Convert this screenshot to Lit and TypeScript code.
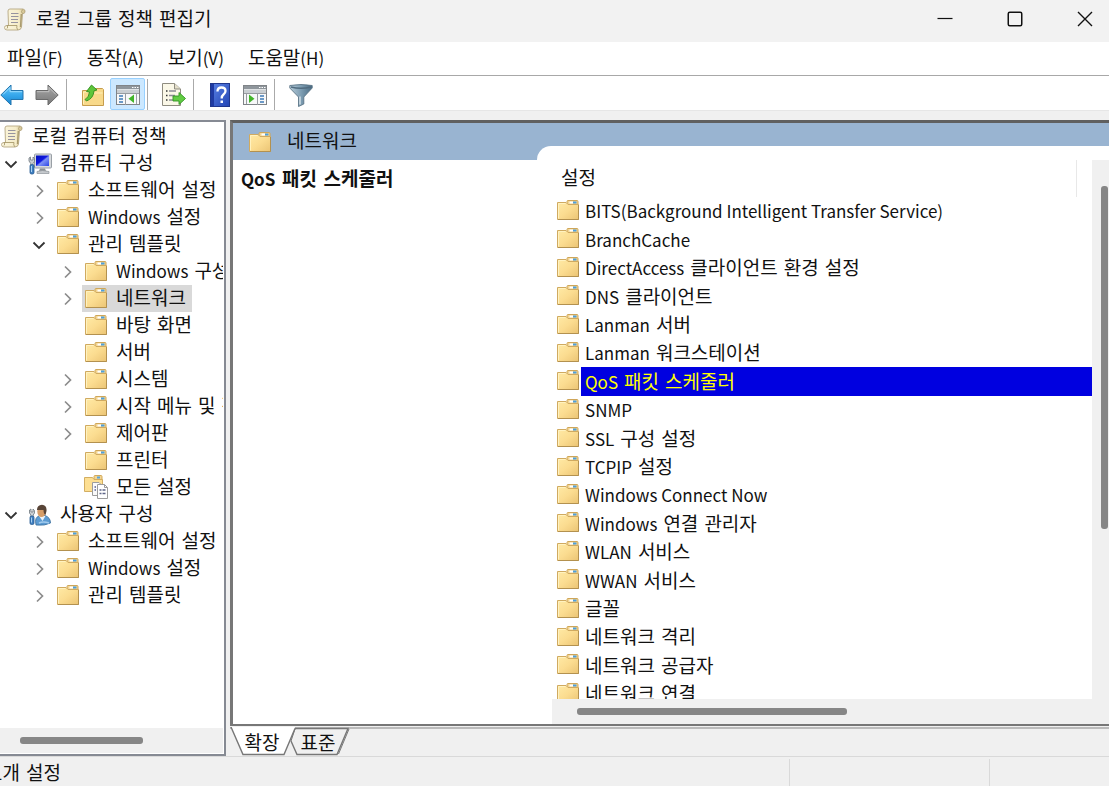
import { LitElement, html, svg, css, nothing, TemplateResult } from "lit";
import { customElement, property, state } from "lit/decorators.js";
import { classMap } from "lit/directives/class-map.js";

const art: Record<string, { w: number; h: number; body: TemplateResult }> = {
  folder: {
    w: 22, h: 20,
    body: svg`
      <defs><linearGradient id="f" x1="0" y1="0" x2="1" y2="1">
        <stop offset="0" stop-color="#ffeaa6"/><stop offset=".5" stop-color="#fbdc90"/><stop offset="1" stop-color="#ebc474"/>
      </linearGradient></defs>
      <path d="M10 4.500V1.500Q10 .5 11 .5H20Q21 .5 21 1.500V6H10Z" fill="#f3d591" stroke="#cfa659"/>
      <rect x="12.500" y="1.500" width="3.500" height="2" fill="#fff"/><rect x="16" y="1.500" width="3.500" height="2" fill="#4d9fdd"/>
      <path d="M.5 2.500H9L11 4.500H21.500V19.500H.5Z" fill="url(#f)" stroke="#d0aa60"/>
      <path d="M1.500 18.500V3.500H8.500" fill="none" stroke="#fff2c0"/>
      <path d="M1 19.500H21.500V5" fill="none" stroke="#b3914f"/>`,
  },
  scroll: {
    w: 22, h: 23,
    body: svg`
      <defs><linearGradient id="s" x1="0" y1="0" x2="1" y2="0">
        <stop offset="0" stop-color="#fbf6df"/><stop offset=".7" stop-color="#f5ecc8"/><stop offset="1" stop-color="#cdbb86"/>
      </linearGradient></defs>
      <path d="M6 1H19Q21.500 1.500 21 4Q20.500 6 18.500 5.500L17.500 19Q17 22 14 22H3Q.5 22 .5 19.500Q.5 17.500 3 17.500H4.500L4 3Q4 1 6 1Z" fill="url(#s)" stroke="#b5a782" stroke-width=".9"/>
      <path d="M18.500 5.500Q16.500 4 18.500 1.500M3 17.500H13Q12 20 14 22M3 17.500Q4.500 19 3 20.500" fill="none" stroke="#a99b6d" stroke-width=".9"/>
      <path d="M17.300 6L16.500 19" stroke="#a99a6d" stroke-width="1.400"/>
      <path d="M7 5.500H14.500M7 8.500H14.500M7 11.500H14M7 14.500H14" stroke="#96939f" stroke-width="1.100"/>`,
  },
  computer: {
    w: 24, h: 22,
    body: svg`
      <defs><linearGradient id="c" x1="0" y1="0" x2="1" y2="1">
        <stop offset="0" stop-color="#0010b8"/><stop offset=".45" stop-color="#1018e0"/><stop offset=".55" stop-color="#7f93f5"/><stop offset="1" stop-color="#2a44e6"/>
      </linearGradient></defs>
      <rect x="6.500" y="1" width="17" height="14" rx="1" fill="#d7dadd" stroke="#9aa0a6"/>
      <rect x="8" y="2.500" width="13" height="10.500" fill="url(#c)"/>
      <path d="M12 15.500H17L18 18H11Z" fill="#8b9196"/><path d="M9 18.500Q14 16.500 21 18.500V20.500H9Z" fill="#c5c9cd" stroke="#8e9499" stroke-width=".7"/>
      <path d="M1 8V5L2.500 4V7H5V4L6.500 5.500V8.500L5 10.500V13H2.700V10.500Z" fill="#c9ced2" stroke="#6f777e" stroke-width=".8"/>
      <rect x="2" y="11.500" width="4" height="9.500" rx="1.500" fill="#3f7fc0" stroke="#24588f" stroke-width=".8"/><path d="M3.500 13V19" stroke="#a7d1f3"/>`,
  },
  user: {
    w: 24, h: 22,
    body: svg`
      <path d="M8 21Q6 13 12 11.500H17Q22.500 13.500 22.500 19Q17 22 8 21Z" fill="#5c9bd2" stroke="#34699b" stroke-width=".8"/>
      <path d="M11 12L14.500 17L17.500 12Z" fill="#edf3f8"/><path d="M11 19Q15 17 21 19" fill="none" stroke="#a2cbee" stroke-width="1.500"/>
      <ellipse cx="13.500" cy="7.500" rx="4.200" ry="5.500" fill="#d69d68"/>
      <path d="M9 6Q9 1 14 .7Q19 1 18.500 7L17.500 11Q15.500 10 15.500 6Q12 6 9 6Z" fill="#584437"/>
      <path d="M1.500 9V6L3 5V8H5V5L6.500 6.500V9L5.200 11V13H2.900V11Z" fill="#ced3d7" stroke="#6f777e" stroke-width=".8"/>
      <rect x="2" y="12" width="4" height="8.500" rx="1.500" fill="#3f7fc0" stroke="#24588f" stroke-width=".8"/><path d="M3.500 13.500V18.500" stroke="#a7d1f3"/>`,
  },
  all: {
    w: 24, h: 24,
    body: svg`
      <path d="M10 4V1.500Q10 .5 11 .5H17Q18 .5 18 1.500V6H10Z" fill="#f3d591" stroke="#d2a95a"/>
      <rect x="13" y="1.500" width="3" height="2" fill="#58a4dc"/>
      <path d="M.5 2.500H8.500L10 4.500H18.500V16.500H.5Z" fill="#fddf92" stroke="#d3ae62"/>
      <path d="M8.500 7.500H15L17.500 10V20.500H8.500Z" fill="#fafafa" stroke="#9c9c9c"/>
      <path d="M10.500 12H12M10.500 15H12" stroke="#555d92" stroke-width="1.500"/>
      <path d="M13.500 9.500H20.500L23.500 12.500V23.500H13.500Z" fill="#fff" stroke="#9c9c9c"/><path d="M20.500 9.500V12.500H23.500" fill="none" stroke="#9c9c9c"/>
      <path d="M15.500 15H17.500M18.500 15H21.500M15.500 18.500H17.500M18.500 18.500H21.500" stroke="#5f6688" stroke-width="1.500"/>`,
  },
  back: {
    w: 24, h: 22,
    body: svg`<defs><linearGradient id="b" x1="0" y1="0" x2="0" y2="1"><stop offset="0" stop-color="#6cc8f7"/><stop offset=".5" stop-color="#37a8ec"/><stop offset="1" stop-color="#1583cf"/></linearGradient></defs>
      <path d="M.8 11L11 1V6.500H23V15.500H11V21Z" fill="url(#b)" stroke="#2475ad" stroke-linejoin="round"/><path d="M3 10.500L10 3.500V7.700H22" fill="none" stroke="#9adcff"/>`,
  },
  forward: {
    w: 24, h: 22,
    body: svg`<defs><linearGradient id="g" x1="0" y1="0" x2="0" y2="1"><stop offset="0" stop-color="#a8a8a8"/><stop offset="1" stop-color="#777"/></linearGradient></defs>
      <path d="M23.200 11L13 1V6.500H1V15.500H13V21Z" fill="url(#g)" stroke="#6a6a6a" stroke-linejoin="round"/><path d="M2 7.700H14V3.500L21 10.500" fill="none" stroke="#c0c0c0"/>`,
  },
  up: {
    w: 22, h: 22,
    body: svg`<path d="M.5 6.500H8L10 4.500H20.500L21.500 5.500V21.500H.5Z" fill="#f8d98a" stroke="#c69d4e"/><path d="M1.500 20V8H8.500L10.500 9H20.500" fill="none" stroke="#fff0b7"/>
      <path d="M3 15.500Q7 13.500 7.500 8L4.500 7.500L9.500 1L15 6L12 6.800Q11.500 14.500 4.500 17Z" fill="#5dc53a" stroke="#2f8d1c" stroke-linejoin="round" stroke-width=".9"/>`,
  },
  tree: {
    w: 24, h: 20,
    body: svg`<rect x=".5" y=".5" width="23" height="19" fill="#f7f8f9" stroke="#808488"/><rect x="1" y="1" width="22" height="3" fill="#8f969c"/><path d="M16 2.500H17.500M18.500 2.500H20M21 2.500H22.500" stroke="#fff"/>
      <rect x="1" y="4.500" width="22" height="3.500" fill="#c9ced2"/><path d="M1 8.500H23M9.500 8V20" stroke="#979ca1"/>
      <path d="M3 11H7M3 14H7M3 17H7" stroke="#3e79b7" stroke-width="1.500"/><path d="M18 9.500V18L12.500 13.700Z" fill="#42b52a"/><path d="M20.500 9V19" stroke="#9ba1a6"/>`,
  },
  pane: {
    w: 24, h: 20,
    body: svg`<rect x=".5" y=".5" width="23" height="19" fill="#f7f8f9" stroke="#808488"/><rect x="1" y="1" width="22" height="3" fill="#8f969c"/><path d="M16 2.500H17.500M18.500 2.500H20M21 2.500H22.500" stroke="#fff"/>
      <rect x="1" y="4.500" width="22" height="3.500" fill="#c9ced2"/><path d="M1 8.500H23M14.500 8V20M3.500 9V19" stroke="#979ca1"/>
      <path d="M17 11H21M17 14H21M17 17H21" stroke="#3e79b7" stroke-width="1.500"/><path d="M6 9.500V18L11.500 13.700Z" fill="#42b52a"/>`,
  },
  exportlist: {
    w: 24, h: 24,
    body: svg`<path d="M.5 .5H12.500L18.500 6V22.500H.5Z" fill="#fbf8e8" stroke="#8f8c80"/><path d="M12.500 .5V6H18.500" fill="#e4dfca" stroke="#8f8c80"/>
      <path d="M4 8H5.500M4 12.500H5.500M4 17H5.500" stroke="#333" stroke-width="1.500"/><path d="M7 8H14M7 12.500H13M7 17H13" stroke="#8b8b94" stroke-width="1.300"/>
      <path d="M11 13H17V9.500L23.500 15.500L17 21.500V18H11Z" fill="#62cc43" stroke="#329424" stroke-linejoin="round" stroke-width=".9"/>`,
  },
  help: {
    w: 20, h: 24,
    body: svg`<defs><linearGradient id="h" x1="0" y1="0" x2="1" y2="1"><stop offset="0" stop-color="#5b83e6"/><stop offset="1" stop-color="#2345b4"/></linearGradient></defs>
      <rect x=".5" y=".5" width="19" height="23" fill="url(#h)" stroke="#20378d"/><rect x="1" y="1" width="3" height="22" fill="#1f3aa2"/>
      <path d="M7.500 8.500Q7.500 4.500 11.500 4.500Q15.500 4.500 15.500 8Q15.500 10 13.500 11.500Q11.700 12.800 11.700 15.500" fill="none" stroke="#fff" stroke-width="2.300"/><rect x="10.500" y="17.500" width="2.500" height="2.500" fill="#fff"/>`,
  },
  filter: {
    w: 24, h: 23,
    body: svg`<defs><linearGradient id="t" x1="0" y1="0" x2="1" y2="0"><stop offset="0" stop-color="#b6cbd8"/><stop offset=".5" stop-color="#7e9eb3"/><stop offset="1" stop-color="#4a6c84"/></linearGradient></defs>
      <path d="M.8 1.500Q12 -.5 23.200 1.500V4L14.800 13V20L9.500 22.500V13L.8 4Z" fill="url(#t)" stroke="#5b7587" stroke-width=".9"/><path d="M2 3Q12 5.500 22 3" fill="none" stroke="#506b7f" stroke-width="1.500"/><path d="M11 12.500V20.500" stroke="#dfe9ef" stroke-width="1.300"/>`,
  },
  minimize: { w: 16, h: 16, body: svg`<path d="M.5 7.500H15.500" stroke="#111" stroke-width="1.200"/>` },
  maximize: { w: 16, h: 16, body: svg`<rect x="1.250" y="1.250" width="13.500" height="13.500" rx="1.500" fill="none" stroke="#111" stroke-width="1.500"/>` },
  close: { w: 16, h: 16, body: svg`<path d="M1 1L15 15M15 1L1 15" stroke="#111" stroke-width="1.400"/>` },
  closed: { w: 12, h: 14, body: svg`<path d="M4 1.500L9.500 7L4 12.500" fill="none" stroke="#8c8c8c" stroke-width="1.700"/>` },
  open: { w: 14, h: 12, body: svg`<path d="M1.500 3.500L7 9L12.500 3.500" fill="none" stroke="#333" stroke-width="1.800"/>` },
};

@customElement("gp-icon")
export class GpIcon extends LitElement {
  static styles = css`
    :host { display: block; flex: none; }
    svg { display: block; }
  `;
  @property() name = "folder";
  render() {
    const a = art[this.name];
    return html`<svg width=${a.w} height=${a.h} viewBox="0 0 ${a.w} ${a.h}" aria-hidden="true">${a.body}</svg>`;
  }
}

/** Sets the Latin runs of a label in the smaller Latin size, the Hangul in the base size. */
const label = (s: string) =>
  s.split(/([!-~]+(?: [!-~]+)*)/).filter(Boolean).map((p) => (/^[!-~]/.test(p) ? html`<span class="latin">${p}</span>` : p));

interface Node { label: string; level: number; icon?: string; arrow?: "open" | "closed"; }

const nodes: Node[] = [
  { label: "로컬 컴퓨터 정책", level: 0, icon: "scroll" },
  { label: "컴퓨터 구성", level: 1, icon: "computer", arrow: "open" },
  { label: "소프트웨어 설정", level: 2, arrow: "closed" },
  { label: "Windows 설정", level: 2, arrow: "closed" },
  { label: "관리 템플릿", level: 2, arrow: "open" },
  { label: "Windows 구성 요소", level: 3, arrow: "closed" },
  { label: "네트워크", level: 3, arrow: "closed" },
  { label: "바탕 화면", level: 3 },
  { label: "서버", level: 3 },
  { label: "시스템", level: 3, arrow: "closed" },
  { label: "시작 메뉴 및 작업 표시줄", level: 3, arrow: "closed" },
  { label: "제어판", level: 3, arrow: "closed" },
  { label: "프린터", level: 3 },
  { label: "모든 설정", level: 3, icon: "all" },
  { label: "사용자 구성", level: 1, icon: "user", arrow: "open" },
  { label: "소프트웨어 설정", level: 2, arrow: "closed" },
  { label: "Windows 설정", level: 2, arrow: "closed" },
  { label: "관리 템플릿", level: 2, arrow: "closed" },
];

const settings = [
  "BITS(Background Intelligent Transfer Service)", "BranchCache", "DirectAccess 클라이언트 환경 설정",
  "DNS 클라이언트", "Lanman 서버", "Lanman 워크스테이션", "QoS 패킷 스케줄러", "SNMP", "SSL 구성 설정",
  "TCPIP 설정", "Windows Connect Now", "Windows 연결 관리자", "WLAN 서비스", "WWAN 서비스", "글꼴",
  "네트워크 격리", "네트워크 공급자", "네트워크 연결",
];

const tools: (null | { icon: string; label: string; on?: boolean })[] = [
  { icon: "back", label: "뒤로" }, { icon: "forward", label: "앞으로" }, null,
  { icon: "up", label: "한 수준 위로" }, { icon: "tree", label: "콘솔 트리 표시", on: true }, null,
  { icon: "exportlist", label: "목록 내보내기" }, null,
  { icon: "help", label: "도움말" }, { icon: "pane", label: "작업 창 표시" }, null,
  { icon: "filter", label: "필터" },
];

@customElement("app-root")
export class AppRoot extends LitElement {
  static styles = css`
    :host {
      display: flex; flex-direction: column; height: 100vh; overflow: hidden;
      background: #f0f0f0; color: #111;
      font: 19px/27px "DejaVu Sans", "Noto Sans CJK KR", sans-serif;
    }
    * { box-sizing: border-box; }
    .latin { font-family: "Noto Sans CJK KR", sans-serif; font-size: 17px; line-height: 1; }
    button { font: inherit; color: inherit; background: none; border: 0; padding: 0; margin: 0; text-align: left; white-space: nowrap; }
    ul { list-style: none; margin: 0; padding: 0; }

    .title { display: flex; align-items: center; height: 42px; padding: 0 16px 4px 4px; background: #f2f2f2; flex: none; }
    .title h1 { flex: 1; margin: 0 0 0 10px; font-size: 19px; font-weight: 400; }
    .caption { display: flex; gap: 54px; }

    .menu { display: flex; gap: 24px; padding: 3px 7px; background: #fff; border-bottom: 1px solid #a8a8a8; flex: none; }
    .tools { display: flex; align-items: center; height: 35px; padding-top: 2px; margin-left: -6px; background: #fff; border-bottom: 1px solid #e6e6e6; flex: none; }
    .tool { display: flex; align-items: center; justify-content: center; width: 35px; height: 32px; padding-top: 2px; }
    .tool.on { background: #cce8ff; border: 1px solid #99d1ff; border-radius: 2px; }
    .rule { width: 1px; height: 31px; margin: 0 8px 0 2px; background: #aaa; }

    .work { display: flex; flex: 1; min-height: 0; gap: 4px; padding-top: 9px; }
    .side { display: flex; flex-direction: column; width: 226px; flex: none; background: #fff; border: 2px solid #868a93; border-left: 0; padding: 0 1px 1px 0; }
    .tree { flex: 1; min-height: 0; overflow: hidden; padding-top: 1px; }
    .row { display: flex; height: 27px; }
    .arrow { display: flex; align-items: center; justify-content: center; width: 22px; flex: none; }
    .node { display: flex; align-items: center; height: 27px; margin-left: 4px; padding: 0 6px 0 2px; }
    .l0 .node { margin-left: 0; padding-left: 0; }
    .l2 { padding-left: 28px; }
    .l3 { padding-left: 56px; }
    .node.sel { background: #d9d9d9; }
    .pic { display: flex; justify-content: center; width: 24px; margin-right: 8px; }
    .l2 .pic, .l3 .pic { padding-bottom: 2px; }
    .hbar { height: 25px; flex: none; background: #f0f0f0; padding: 9px 20px; }
    .side .hbar .thumb { width: 67%; }
    .thumb { display: block; border-radius: 3px; background: #868686; height: 7px; }

    .main { display: flex; flex-direction: column; flex: 1; min-width: 0; }
    .frame { display: flex; flex: 1; min-height: 0; background: #99b4d1; border: 3px solid #777; border-top-color: #606060; border-right: 0; border-bottom-width: 2px; }
    .info { display: flex; flex-direction: column; width: 304px; flex: none; }
    .head { display: flex; align-items: center; gap: 16px; height: 37px; padding: 0 16px; flex: none; }
    .head h2 { margin: 0; font-size: 19px; font-weight: 400; }
    .detail { flex: 1; background: #fff; padding: 6px 8px; }
    .detail h3 { margin: 0; font-size: 19px; font-weight: 700; }
    .panel { display: flex; flex-direction: column; flex: 1; min-width: 0; margin-top: 23px; padding: 14px 0 0 15px; background: #fff; border-top-left-radius: 14px; }
    .split { display: flex; flex: 1; min-height: 0; }
    .listing { display: flex; flex-direction: column; flex: 1; min-width: 0; }
    .column { height: 37px; flex: none; margin-right: 15px; padding: 5px 9px; border-right: 1px solid #e8e8e8; }
    .items { flex: 1; min-height: 0; overflow: hidden; }
    .item { display: flex; height: 28px; padding-left: 5px; }
    .item:nth-child(5n + 2), .item:nth-child(5n + 4) { height: 29px; }
    .item gp-icon { padding-top: 3px; margin-right: 2px; }
    .item button { flex: 1; padding: 0 4px; line-height: 28px; }
    .item.sel button { background: #0000e0; color: #ff0; }
    .vbar { width: 17px; flex: none; background: #f0f0f0; padding: 26px 1px 26px 9px; }
    .vbar .thumb { height: 67%; }
    .listing .hbar { padding: 9px 25px; }
    .listing .hbar .thumb { width: 55%; }

    .tabs { display: flex; height: 29px; flex: none; margin-top: 1px; border-top: 2px solid #bbb; }
    .tab { position: relative; height: 27px; width: 64px; text-align: center; line-height: 26px; }
    .tab + .tab { width: 60px; margin-left: -6px; }
    .tab svg { position: absolute; left: 0; top: -2px; }
    .tab span { position: relative; }

    .status { display: flex; height: 30px; flex: none; border-top: 1px solid #d9d9d9; }
    .status .text { flex: 1; padding-top: 3px; text-indent: -7px; }
    .status .cell { width: 200px; border-left: 1px solid #d9d9d9; margin-top: 2px; }
    .status .last { width: 120px; }
  `;

  @state() private node = 6;
  @state() private item = 6;

  render() {
    return html`
      <header class="title">
        <gp-icon name="scroll"></gp-icon>
        <h1>로컬 그룹 정책 편집기</h1>
        <div class="caption">
          <button aria-label="최소화"><gp-icon name="minimize"></gp-icon></button>
          <button aria-label="최대화"><gp-icon name="maximize"></gp-icon></button>
          <button aria-label="닫기"><gp-icon name="close"></gp-icon></button>
        </div>
      </header>
      <nav class="menu">
        ${["파일(F)", "동작(A)", "보기(V)", "도움말(H)"].map((m) => html`<button>${label(m)}</button>`)}
      </nav>
      <div class="tools" role="toolbar">
        ${tools.map((t) => t
          ? html`<button class=${classMap({ tool: true, on: !!t.on })} aria-label=${t.label}><gp-icon name=${t.icon}></gp-icon></button>`
          : html`<span class="rule"></span>`)}
      </div>
      <main class="work">
        <section class="side">
          <ul class="tree">
            ${nodes.map((n, i) => html`
              <li class="row l${n.level}">
                ${n.level ? html`<span class="arrow">${n.arrow ? html`<gp-icon name=${n.arrow}></gp-icon>` : nothing}</span>` : nothing}
                <button class=${classMap({ node: true, sel: i === this.node })} @click=${() => (this.node = i)}>
                  <span class="pic"><gp-icon name=${n.icon ?? "folder"}></gp-icon></span><span>${label(n.label)}</span>
                </button>
              </li>`)}
          </ul>
          <div class="hbar"><span class="thumb"></span></div>
        </section>
        <section class="main">
          <div class="frame">
            <div class="info">
              <div class="head"><gp-icon></gp-icon><h2>${label(nodes[this.node].label)}</h2></div>
              <div class="detail"><h3>${label(settings[this.item])}</h3></div>
            </div>
            <div class="panel">
              <div class="split">
                <div class="listing">
                  <div class="column">설정</div>
                  <ul class="items">
                    ${settings.map((s, i) => html`
                      <li class=${classMap({ item: true, sel: i === this.item })}>
                        <gp-icon></gp-icon><button @click=${() => (this.item = i)}>${label(s)}</button>
                      </li>`)}
                  </ul>
                  <div class="hbar"><span class="thumb"></span></div>
                </div>
                <div class="vbar"><span class="thumb"></span></div>
              </div>
            </div>
          </div>
          <div class="tabs">
            <button class="tab">
              <svg width="66" height="30" viewBox="0 0 66 30" aria-hidden="true"><path d="M1 0L13 27.500H54L65 0Z" fill="#fff"/><path d="M1 0L13 27.500H54L65 1.500" fill="none" stroke="#777" stroke-width="1.400"/></svg>
              <span>확장</span>
            </button>
            <button class="tab">
              <svg width="62" height="30" viewBox="0 0 62 30" aria-hidden="true"><path d="M3 14L9 27.500H49L60 1.500H7" fill="none" stroke="#777" stroke-width="1.400"/><path d="M3 14L7 2" stroke="#777"/><path d="M50.500 27L61 2" stroke="#777"/></svg>
              <span>표준</span>
            </button>
          </div>
        </section>
      </main>
      <footer class="status">
        <span class="text">${label("1개 설정")}</span><span class="cell"></span><span class="cell last"></span>
      </footer>`;
  }
}
